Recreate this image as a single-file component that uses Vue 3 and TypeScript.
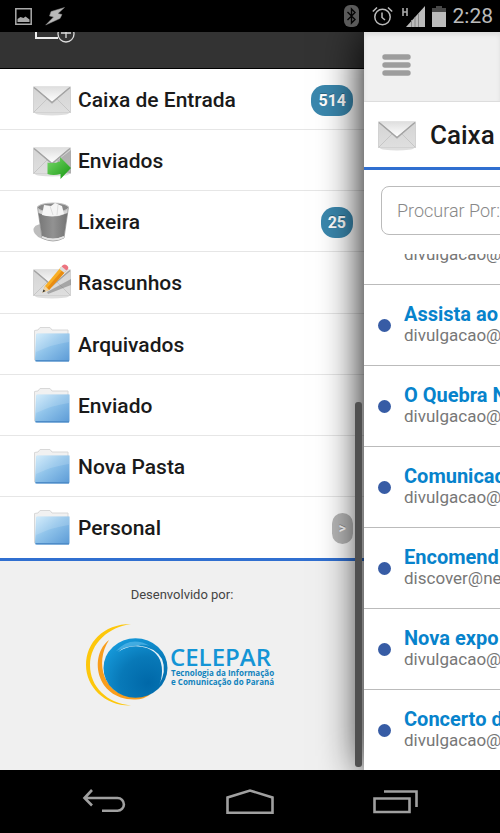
<script setup lang="ts">
interface Folder {
  name: string
  icon: 'inbox' | 'sent' | 'trash' | 'draft' | 'folder'
  count?: number
  more?: boolean
}

interface Mail {
  subject: string
  sender: string
}

const folders: Folder[] = [
  { name: 'Caixa de Entrada', icon: 'inbox', count: 514 },
  { name: 'Enviados', icon: 'sent' },
  { name: 'Lixeira', icon: 'trash', count: 25 },
  { name: 'Rascunhos', icon: 'draft' },
  { name: 'Arquivados', icon: 'folder' },
  { name: 'Enviado', icon: 'folder' },
  { name: 'Nova Pasta', icon: 'folder' },
  { name: 'Personal', icon: 'folder', more: true },
]

const mails: Mail[] = [
  { subject: '', sender: 'divulgacao@' },
  { subject: 'Assista ao', sender: 'divulgacao@' },
  { subject: 'O Quebra N', sender: 'divulgacao@' },
  { subject: 'Comunicad', sender: 'divulgacao@' },
  { subject: 'Encomend', sender: 'discover@ne' },
  { subject: 'Nova expo', sender: 'divulgacao@' },
  { subject: 'Concerto d', sender: 'divulgacao@' },
]
</script>

<template>
  <div class="phone">
    <svg class="defs" width="0" height="0" aria-hidden="true">
      <defs>
        <linearGradient id="env-body" x1="0" y1="0" x2="0" y2="1">
          <stop offset="0" stop-color="#d4d4d4" />
          <stop offset="1" stop-color="#dfdfdf" />
        </linearGradient>
        <linearGradient id="env-flap" x1="0" y1="0" x2="0" y2="1">
          <stop offset="0" stop-color="#dedede" />
          <stop offset="1" stop-color="#ffffff" />
        </linearGradient>
        <linearGradient id="arrow" x1="0" y1="0" x2="1" y2="1">
          <stop offset="0" stop-color="#7ad96c" />
          <stop offset="1" stop-color="#15970f" />
        </linearGradient>
        <linearGradient id="bin" x1="0" y1="0" x2="1" y2="0">
          <stop offset="0" stop-color="#777" />
          <stop offset=".5" stop-color="#929292" />
          <stop offset="1" stop-color="#747474" />
        </linearGradient>
        <linearGradient id="fold" x1="0" y1="0" x2="1" y2="1">
          <stop offset="0" stop-color="#cdeafb" />
          <stop offset=".45" stop-color="#8fc3ea" />
          <stop offset="1" stop-color="#5b9ad6" />
        </linearGradient>
        <symbol id="envelope" viewBox="0 0 38 42">
          <ellipse cx="19" cy="34" rx="17" ry="2.500" fill="#dedede" />
          <rect x="0.500" y="8" width="37" height="25.500" fill="url(#env-body)" stroke="#d2d2d2" />
          <path d="M1 33 14 20M37 33 24 20" stroke="#c6c6c6" fill="none" />
          <path d="M1 9 19 25 37 9" fill="#999" opacity=".4" />
          <path d="M1 7.500 19 23 37 7.500z" fill="url(#env-flap)" />
          <path d="M1 8.500 19 23.500 37 8.500" fill="none" stroke="#a2a2a2" stroke-width="1.200" />
        </symbol>
      </defs>
    </svg>

    <header class="status">
      <div class="status-group">
        <svg width="17" height="17" viewBox="0 0 17 17" aria-hidden="true">
          <path d="M.8.8h15.4v15.4H.8z" fill="none" stroke="#aaa" stroke-width="1.5" />
          <path d="M2.5 14v-3l3-2 3 1 2-1.5 4 3V14z" fill="#aaa" />
        </svg>
        <svg width="21" height="19" viewBox="0 0 21 19" aria-hidden="true">
          <path d="M19.5.5 6 4.5 4.5 9l4 1L.7 18 15 11.5l2-4-4-1z" fill="#bbb" stroke="#888" stroke-width=".5" />
        </svg>
      </div>
      <div class="status-group">
        <svg width="15" height="22" viewBox="0 0 15 22" aria-hidden="true">
          <rect width="15" height="22" rx="6" fill="#5a5a5a" />
          <path d="M3.5 7 11 14.5 7.5 18V4L11 7.5 3.5 15" fill="none" stroke="#050505" stroke-width="1.4" />
        </svg>
        <svg class="alarm" width="21" height="20" viewBox="0 0 21 20" aria-hidden="true">
          <circle cx="10.5" cy="11" r="7.7" fill="none" stroke="#bbb" stroke-width="1.5" />
          <path d="M10 6.500v5l3 2.500M.8 5.500 5 1.500M20.200 5.500 16 1.500" fill="none" stroke="#bbb" stroke-width="1.500" />
        </svg>
        <svg class="signal" width="23" height="21" viewBox="0 0 23 21" aria-hidden="true">
          <path d="M1 2v8M5 2v8M1 6h4" stroke="#aaa" stroke-width="1.6" />
          <path d="M23 0v21H4z" fill="#bbb" />
          <path d="M9.500 14v7M13 11v10M16.500 7v14" stroke="#888" stroke-width="1" />
        </svg>
        <svg width="14" height="21" viewBox="0 0 14 21" aria-hidden="true">
          <path d="M4 0h6v2h4v4H0V2h4z" fill="#484848" />
          <path d="M0 6h14v15H0z" fill="#bbb" />
        </svg>
        <span class="clock">2:28</span>
      </div>
    </header>

    <main class="stage">
      <aside class="drawer">
        <div class="drawer-bar">
          <svg width="42" height="11" viewBox="0 0 42 11" aria-hidden="true">
            <path d="M2 0v6h22" fill="none" stroke="#eee" stroke-width="2" />
            <circle cx="32" cy="2" r="8" fill="#333" stroke="#ddd" stroke-width="1.3" />
            <path d="M32-3v9M27 1h10" stroke="#ddd" stroke-width="1.3" />
          </svg>
        </div>

        <nav class="folders">
          <a v-for="f in folders" :key="f.name" class="folder" href="#">
            <svg class="icon" viewBox="0 0 38 42" aria-hidden="true">
              <template v-if="f.icon === 'inbox' || f.icon === 'sent' || f.icon === 'draft'">
                <use href="#envelope" width="38" height="42" />
              </template>
              <template v-if="f.icon === 'sent'">
                <path d="M25 20 38 10V33H20z" fill="#777" opacity=".4" />
                <path d="M14.500 22.500Q20 24 27 21.500V17L38 28 27.500 39V34Q20 36 14.500 34z" fill="url(#arrow)" />
              </template>
              <template v-else-if="f.icon === 'trash'">
                <ellipse cx="11" cy="31" rx="11" ry="7" fill="#bdbdbd" transform="rotate(22 11 31)" />
                <path d="M4.500 6 9 37Q20 43 31 37L35.500 6z" fill="#d5d5d5" stroke="#999" stroke-width=".8" />
                <path d="M5.500 12 9 35Q20 40 31 35L34.500 12Q20 19 5.500 12z" fill="url(#bin)" />
                <ellipse cx="20" cy="6.500" rx="15.500" ry="4.500" fill="#888" stroke="#c5c5c5" />
                <path d="M9 14 11 4 18 5 22 2 29 5 31 13Q20 17 9 14z" fill="#f5f5f5" />
                <path d="M17 5 20 14M25 4 24 14" stroke="#dedede" />
                <path d="M9 36Q20 41 31 36" fill="none" stroke="#e5e5e5" stroke-width="1.500" />
              </template>
              <template v-else-if="f.icon === 'draft'">
                <path d="M14 30 38 17V23L15 32z" fill="#555" opacity=".4" />
                <path d="M9.500 30.500 12 24 28 5 33 9 16 28z" fill="#f8ae24" />
                <path d="M14 26 30.500 7 33 9 16 28z" fill="#e88c14" />
                <path d="M9.500 30.500 12 24 16 28z" fill="#efd3a4" />
                <path d="M9.500 30.500 10.500 27.500 12.500 29z" fill="#333" />
                <path d="M26.500 7 28.500 4.500 33.500 8.500 31.500 11z" fill="#ddd" />
                <path d="M28.500 4.500Q31 1 34 3.500T33.500 8.500z" fill="#ec7480" />
              </template>
              <template v-else-if="f.icon === 'folder'">
                <path d="M1.500 36V6.500L5 6 7 3.500H17L19 6H35V36z" fill="#f1f1f1" stroke="#d8d8d8" />
                <path d="M4 9.500H36.500V36Q36.500 37.500 35 37.500H4Q2 37.500 2 35.500L3 11Q3 9.500 4 9.500z" fill="url(#fold)" />
                <path d="M3.500 10H36L36 18Q20 20 3 28z" fill="#fff" opacity=".15" />
                <path d="M2.500 36.800H36" stroke="#4e8cc8" stroke-width="1.500" />
              </template>
            </svg>
            <span class="folder-name">{{ f.name }}</span>
            <span v-if="f.count" class="badge">{{ f.count }}</span>
            <span v-if="f.more" class="badge more">&gt;</span>
          </a>
        </nav>

        <footer class="credits">
          <p class="credits-label">Desenvolvido por:</p>
          <svg width="194" height="84" viewBox="0 0 194 84" role="img" aria-label="CELEPAR">
            <defs>
              <radialGradient id="ball" cx=".7" cy=".75" r=".8">
                <stop offset="0" stop-color="#0068a8" />
                <stop offset=".55" stop-color="#0879b8" />
                <stop offset="1" stop-color="#1597d8" />
              </radialGradient>
            </defs>
            <path d="M46 1C18 1 1 20 1 42S20 83 46 82.500C22 80 5 64 5 42S24 4 46 1z" fill="#fdc70c" />
            <path d="M24 17C4 32 10 76 49 76.500Q58 77 66 71L50 74C19 73 9 40 24 17z" fill="#f99d1c" />
            <ellipse cx="50.500" cy="45" rx="32" ry="29.800" fill="url(#ball)" />
            <path d="M33 29Q46 20 62 25 77 31 77 48 77 56 74 62 82 48 77 36 70 24 53 22.500 39 22.500 33 29z" fill="#fff" opacity=".9" />
            <path d="M31 28Q46 12 65 23 53 19 31 28z" fill="#55b8ea" opacity=".7" />
            <text x="85" y="43" class="logo-name">CELEPAR</text>
            <text x="86" y="53" class="logo-line">Tecnologia da Informação</text>
            <text x="86" y="62" class="logo-line">e Comunicação do Paraná</text>
          </svg>
        </footer>
        <div class="scrollbar"></div>
      </aside>

      <section class="panel">
        <header class="panel-bar">
          <button class="menu" type="button" aria-label="Menu">
            <svg width="29" height="22" viewBox="0 0 29 22" aria-hidden="true">
              <path d="M3 3h23M3 11h23M3 19h23" stroke="#9d9d9d" stroke-width="5.400" stroke-linecap="round" />
            </svg>
          </button>
        </header>
        <div class="panel-title">
          <svg class="icon" viewBox="0 0 38 42" aria-hidden="true">
            <use href="#envelope" width="38" height="42" />
          </svg>
          <h1>Caixa</h1>
        </div>
        <div class="search">
          <input type="search" placeholder="Procurar Por:" aria-label="Procurar Por:" />
        </div>
        <ul class="mails">
          <li v-for="(m, i) in mails" :key="i" class="mail">
            <span class="dot"></span>
            <div class="mail-text">
              <a class="subject" href="#">{{ m.subject }}</a>
              <span class="sender">{{ m.sender }}</span>
            </div>
          </li>
        </ul>
      </section>
    </main>

    <nav class="keys">
      <button type="button" aria-label="Voltar">
        <svg width="44" height="26" viewBox="0 0 44 26" aria-hidden="true">
          <path d="M10 1 2.500 9 10 16.500M3 9H35.500A6.300 6.300 0 0 1 35.500 21.800H20" fill="none" stroke="#a0a0a0" stroke-width="2.600" />
        </svg>
      </button>
      <button type="button" aria-label="Início">
        <svg width="48" height="26" viewBox="0 0 48 26" aria-hidden="true">
          <path d="M1.500 23.700V8.500L24 1.500 46.500 8.500V23.700z" fill="none" stroke="#a0a0a0" stroke-width="2.600" />
        </svg>
      </button>
      <button type="button" aria-label="Recentes">
        <svg width="46" height="26" viewBox="0 0 46 26" aria-hidden="true">
          <path d="M1.500 9.500h35v13.500h-35zM11 2.500H43.500V18" fill="none" stroke="#a0a0a0" stroke-width="2.600" />
        </svg>
      </button>
    </nav>
  </div>
</template>

<style>
body {
  background: #000;
  overflow: hidden;
}
</style>

<style scoped>
.phone {
  display: flex;
  flex-direction: column;
  min-height: 100vh;
  background: #000;
  color: #1a1a1a;
  font-family: Roboto, "Liberation Sans", sans-serif;
}
.defs {
  position: absolute;
}
button {
  padding: 0;
  border: 0;
  background: none;
  display: flex;
}
a {
  text-decoration: none;
}

.status {
  display: flex;
  justify-content: space-between;
  align-items: center;
  height: 32px;
  padding: 0 7px 0 15px;
}
.status-group {
  display: flex;
  align-items: center;
  gap: 7px;
}
.status-group:first-child {
  gap: 13px;
}
.alarm {
  margin-left: 6px;
}
.signal {
  margin-left: 2px;
}
.clock {
  color: #bbb;
  font-size: 21px;
  line-height: 32px;
}

.stage {
  flex: 1;
  display: flex;
  overflow: hidden;
}
.drawer {
  position: relative;
  flex: 0 0 72.8%;
  display: flex;
  flex-direction: column;
  background: #f0f0f0;
}
.drawer-bar {
  height: 36px;
  padding-left: 34px;
  border-bottom: 1px solid #000;
  background: #333;
}
.drawer-bar svg {
  display: block;
}
.folders {
  flex: 1;
  display: grid;
  grid-auto-rows: 1fr;
  background: #fff;
  border-bottom: 3px solid #306fd0;
}
.folder {
  display: flex;
  align-items: center;
  padding: 2px 11px 0 33px;
  border-bottom: 1px solid #e6e6e6;
  color: #1a1a1a;
}
.folder:last-child {
  border-bottom: 0;
}
.icon {
  width: 38px;
  height: 42px;
  flex: none;
}
.folder-name {
  flex: 1;
  padding-left: 7px;
  font-size: 21px;
  line-height: 24px;
  font-weight: 500;
}
.badge {
  padding: 0 7px;
  border-radius: 14px;
  background: #3a87ad;
  color: #fff;
  font-size: 16px;
  line-height: 31px;
  font-weight: 700;
  text-shadow: 0 -1px 0 rgba(0, 0, 0, 0.25);
}
.more {
  background: #b8b8b8;
  font-size: 14px;
}
.credits {
  height: 209px;
  display: flex;
  flex-direction: column;
  align-items: center;
}
.credits-label {
  margin: 25px 0 19px;
  font-size: 13px;
  line-height: 18px;
  color: #444;
}
.credits svg {
  display: block;
}
.logo-name {
  font: 600 24px "Open Sans", sans-serif;
  fill: #1495d6;
}
.logo-line {
  font: 700 8px "Open Sans", sans-serif;
  fill: #1283bd;
}

.panel {
  position: relative;
  flex: 1;
  min-width: 0;
  display: flex;
  flex-direction: column;
  background: #fff;
  box-shadow: 0 0 40px #000;
}
.panel-bar {
  height: 70px;
  box-sizing: border-box;
  display: flex;
  align-items: center;
  padding: 0 0 3px 18px;
  background: #f0f0f0;
  border-bottom: 1px solid #ddd;
  box-shadow: inset 0 3px 4px #ddd;
}
.panel-title {
  height: 65px;
  display: flex;
  align-items: center;
  gap: 14px;
  padding-left: 14px;
  border-bottom: 3px solid #306fd0;
}
h1 {
  margin: 0;
  font-size: 26px;
  line-height: 32px;
  font-weight: 500;
}
.search {
  overflow: hidden;
  padding: 16px 0 19px 17px;
}
.search input {
  display: block;
  box-sizing: border-box;
  width: 100vw;
  height: 49px;
  padding: 0 15px;
  border: 1px solid #bbb;
  border-radius: 8px;
  background: #fff;
  font-family: inherit;
  font-size: 18px;
  font-weight: 300;
}
.search input::placeholder {
  color: #888;
}
.mails {
  flex: 1 1 0;
  min-height: 0;
  margin: 0;
  padding: 0;
  list-style: none;
  overflow: hidden;
  display: flex;
  flex-direction: column;
  justify-content: flex-end;
}
.mail {
  flex: none;
  height: 81px;
  box-sizing: border-box;
  display: flex;
  align-items: center;
  gap: 13px;
  padding-left: 14px;
  border-top: 1px solid #bbb;
  white-space: nowrap;
}
.dot {
  flex: none;
  width: 13px;
  height: 13px;
  border-radius: 50%;
  background: #375ca5;
}
.mail-text {
  display: flex;
  flex-direction: column;
  padding-bottom: 2px;
}
.subject {
  height: 22px;
  font-size: 20px;
  line-height: 22px;
  font-weight: 700;
  color: #0783cc;
}
.sender {
  font-size: 17px;
  line-height: 20px;
  color: #777;
}
.scrollbar {
  position: absolute;
  z-index: 1;
  right: 2px;
  bottom: 3px;
  width: 7px;
  height: 365px;
  border-radius: 3px;
  background: #505050;
}

.keys {
  height: 63px;
  display: grid;
  grid-template-columns: repeat(3, 1fr);
  align-items: center;
  padding: 0 31px;
}
.keys button {
  justify-content: center;
}
</style>
